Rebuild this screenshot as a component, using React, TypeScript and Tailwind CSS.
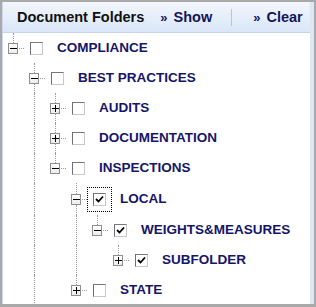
// Document folders tree panel

type Node = {
  label: string;
  level: number;
  expanded?: boolean;
  checked?: boolean;
  focused?: boolean;
  hidden?: boolean;
};

const nodes: Node[] = [
  { label: "COMPLIANCE", level: 0, expanded: true },
  { label: "BEST PRACTICES", level: 1, expanded: true },
  { label: "AUDITS", level: 2 },
  { label: "DOCUMENTATION", level: 2 },
  { label: "INSPECTIONS", level: 2, expanded: true },
  { label: "LOCAL", level: 3, expanded: true, checked: true, focused: true },
  { label: "WEIGHTS&MEASURES", level: 4, expanded: true, checked: true },
  { label: "SUBFOLDER", level: 5, checked: true },
  { label: "STATE", level: 3 },
  // more folders below the fold keep the level-1 guide running
  { label: "", level: 1, hidden: true },
];

// does column k keep going below row i?
function continues(i: number, k: number) {
  for (let j = i + 1; j < nodes.length; j++) {
    if (nodes[j].level <= k) return nodes[j].level === k;
  }
  return false;
}

export default function App() {
  return (
    <div className="w-[316px] h-[307px] border-2 border-b-[3px] border-[#a9a9a9] bg-white flex flex-col overflow-hidden font-['Liberation_Sans',Arial,sans-serif]">
      <div className="flex-1 flex flex-col border-l border-l-[#c9d8ee] border-r-4 border-r-[#dce6f4] min-h-0">
        {/* Header */}
        <header className="h-[31px] shrink-0 flex items-center pl-[14px] pt-px border-b border-[#c3d4ec] bg-gradient-to-b from-[#f3f6fc] to-[#d9e6f8]">
          <span className="text-[14.5px] font-bold text-[#111]">Document Folders</span>
          <a className="ml-[16px] text-[14.5px] font-bold text-[#14145c]">
            <span className="text-[13px] mr-[6px]">»</span>Show
          </a>
          <span className="ml-[19px] h-[17px] w-px bg-[#b3c5df]" />
          <a className="ml-[21px] text-[14.5px] font-bold text-[#14145c]">
            <span className="text-[13px] mr-[6px]">»</span>Clear
          </a>
        </header>

        {/* Tree */}
        <div className="flex-1 min-h-0 overflow-hidden">
          {nodes.map((n, i) =>
            n.hidden ? null : <TreeRow key={i} node={n} index={i} />
          )}
        </div>
      </div>
    </div>
  );
}

function TreeRow({ node, index }: { node: Node; index: number }) {
  const guides = Array.from({ length: node.level }, (_, k) => continues(index, k));
  const tall = node.focused;
  return (
    <div className={`${tall ? "h-[32px]" : "h-[30px]"} flex items-stretch`}>
      {guides.map((on, k) => (
        <div key={k} className="w-[21px] shrink-0">
          {on && <div className="ml-[10px] h-full border-l border-dotted border-[#9a9a9a]" />}
        </div>
      ))}

      {/* expander + connectors */}
      <div className="w-[21px] shrink-0 flex flex-col">
        <div className={`ml-[10px] ${tall ? "h-[11px]" : "h-[10px]"} border-l border-dotted border-[#9a9a9a]`} />
        <div className="flex items-center h-[11px]">
          <span className="ml-[5px] w-[11px] h-[11px] border border-[#8e8e8e] bg-gradient-to-b from-white to-[#ececec] flex items-center justify-center relative">
            <span className="w-[7px] h-px bg-black" />
            {!node.expanded && <span className="absolute w-px h-[7px] bg-black" />}
          </span>
          <span className="ml-[1px] w-[5px] border-t border-dotted border-[#9a9a9a]" />
        </div>
        {continues(index, node.level) && (
          <div className="ml-[10px] flex-1 border-l border-dotted border-[#9a9a9a]" />
        )}
      </div>

      {/* checkbox */}
      <div className="ml-[6px] flex items-center">
        <span
          className={`w-[13px] h-[13px] bg-white border border-t-[#777] border-l-[#6f6a82] border-r-[#c8c8c8] border-b-[#c8c8c8] flex items-center justify-center ${
            node.focused ? "outline outline-1 outline-dotted outline-black outline-offset-[5px]" : ""
          }`}
        >
          {node.checked && (
            <svg width="11" height="11" viewBox="0 0 11 11">
              <polyline points="2,5 4.5,7.5 9,2.5" fill="none" stroke="#000" strokeWidth="1.8" />
            </svg>
          )}
        </span>
      </div>

      <div className="ml-[14px] flex items-center text-[13.5px] font-bold text-[#15156a] whitespace-nowrap">
        {node.label}
      </div>
    </div>
  );
}
